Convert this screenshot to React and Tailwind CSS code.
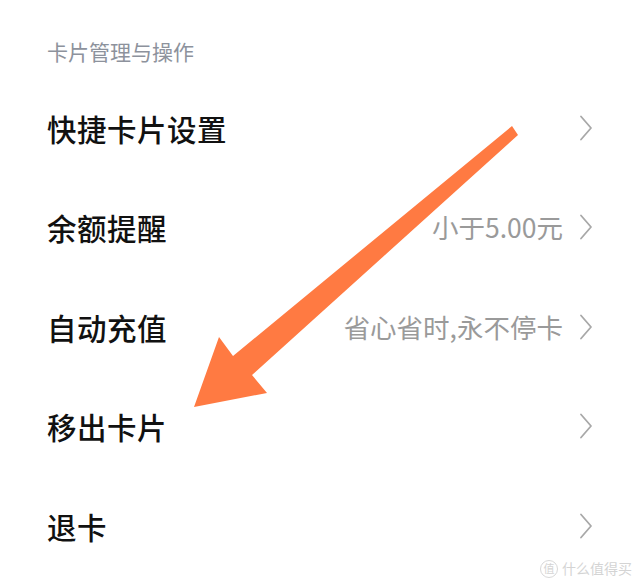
import { ChevronRight } from "lucide-react";

const rows = [
  { title: "快捷卡片设置", value: "" },
  { title: "余额提醒", value: "小于5.00元" },
  { title: "自动充值", value: "省心省时,永不停卡" },
  { title: "移出卡片", value: "" },
  { title: "退卡", value: "" },
];

function Chevron() {
  return (
    <svg width="14" height="26" viewBox="0 0 14 26" className="shrink-0">
      <path d="M2 1.5 L12 13 L2 24.5" fill="none" stroke="#a8a8a8" strokeWidth="1.8" strokeLinejoin="round" strokeLinecap="round" />
    </svg>
  );
}

export default function App() {
  return (
    <div
      className="relative w-[640px] h-[587px] overflow-hidden bg-white"
      style={{ fontFamily: '"Noto Sans CJK SC", "Noto Sans", sans-serif' }}
    >
      {/* section title */}
      <div className="h-[78px] pt-[37px] pl-[47px]">
        <p className="text-[21px] leading-[28px] text-[#8d929c]">卡片管理与操作</p>
      </div>

      {/* settings list */}
      <div>
        {rows.map((row) => (
          <div key={row.title} className="flex items-center h-[99.5px] pl-[47px] pr-[47px]">
            <span className="flex-1 text-[29.5px] font-medium text-[#111] tracking-[0.5px]">
              {row.title}
            </span>
            {row.value && (
              <span className="text-[26.5px] text-[#9a9a9a] mr-[16px]">{row.value}</span>
            )}
            <Chevron />
          </div>
        ))}
      </div>

      {/* orange arrow overlay */}
      <svg className="absolute left-0 top-0 pointer-events-none" width="640" height="587" viewBox="0 0 640 587">
        <polygon
          points="512,126 518,135 252,375 267,393 194,407 219,337 233,356"
          fill="#ff7a42"
        />
      </svg>

      {/* watermark */}
      <div className="absolute right-[8px] bottom-[8px] flex items-center gap-[4px] text-[#d4d4d4] text-[14px]">
        <span className="flex items-center justify-center w-[18px] h-[18px] rounded-full border border-[#d8d8d8] text-[11px]">值</span>
        <span>什么值得买</span>
      </div>
    </div>
  );
}
